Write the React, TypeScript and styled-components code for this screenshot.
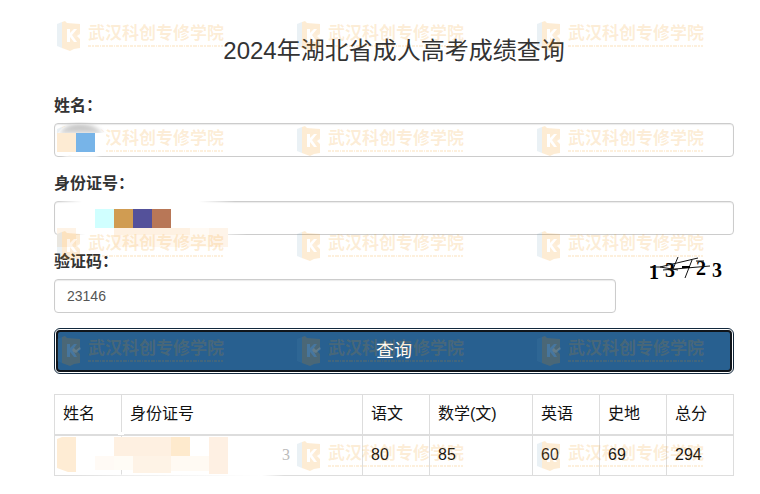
import React from "react";
import styled, { createGlobalStyle } from "styled-components";

const GlobalStyle = createGlobalStyle`
  *, *::before, *::after { box-sizing: border-box; }
  body {
    margin: 0;
    background: #fff;
    color: #333;
    font-family: "Liberation Sans", "Noto Sans CJK SC", sans-serif;
    font-size: 16px;
    line-height: 24px;
  }
`;

const Page = styled.div`
  position: relative;
  overflow: hidden;
  padding: 36px 26px 18px 54px;
`;

const Title = styled.h1`
  margin: 0;
  font-size: 24px;
  line-height: 30px;
  font-weight: 400;
  text-align: center;
`;

const Form = styled.form`
  display: flex;
  flex-direction: column;
  gap: 14px;
  margin-top: 27px;
`;

const Field = styled.div`
  flex: 1;
  display: flex;
  flex-direction: column;
  gap: 4px;
`;

const Label = styled.label`
  align-self: flex-start;
  font-weight: 700;
  line-height: 26px;
`;

const Control = styled.div`
  position: relative;
  display: flex;
`;

const TextInput = styled.input`
  flex: 1;
  min-width: 0;
  height: 34px;
  padding: 6px 12px;
  border: 1px solid #ccc;
  border-radius: 4px;
  background: #fff;
  box-shadow: inset 0 1px 1px rgba(0, 0, 0, 0.08);
  color: #555;
  font-family: inherit;
  font-size: 14px;
  line-height: 20px;
`;

const CodeRow = styled.div`
  display: flex;
  align-items: flex-start;
  gap: 30px;
`;

const Captcha = styled.svg`
  flex: none;
  width: 88px;
  height: 34px;
`;

const Submit = styled.button`
  height: 42px;
  margin: 3px 2px 2px;
  border: 2px solid #10151b;
  border-radius: 4px;
  outline: 1px solid #12283c;
  outline-offset: 1px;
  background: #286090;
  color: #fff;
  font-family: inherit;
  font-size: 18px;
  line-height: 24px;
`;

const TableWrap = styled.div`
  position: relative;
  margin-top: 20px;
`;

const Table = styled.table`
  width: 100%;
  table-layout: fixed;
  border-collapse: collapse;
  color: #111;
`;

const Col = styled.col<{ $w?: number }>`
  width: ${(p) => (p.$w ? `${p.$w}px` : "auto")};
`;

const cell = `
  height: 40px;
  padding: 7px 8px 9px;
  border: 1px solid #ddd;
  font-weight: 400;
  line-height: 23px;
  text-align: left;
`;

const HeadCell = styled.th`
  ${cell}
  border-bottom-width: 2px;
`;

const Cell = styled.td`
  ${cell}
`;

const FadedCell = styled(Cell)`
  padding-right: 72px;
  color: #bbb;
  font-family: "Liberation Serif", serif;
  text-align: right;
`;

const Mask = styled.svg<{ $front?: boolean }>`
  position: absolute;
  left: 0;
  bottom: 0;
  overflow: visible;
  pointer-events: none;
  z-index: ${(p) => (p.$front ? 1 : 0)};
`;

const Watermarks = styled.div`
  position: absolute;
  inset: 21px auto auto 57px;
  display: grid;
  grid-template-columns: repeat(3, 240px);
  grid-auto-rows: 105px;
  pointer-events: none;
`;

const Mark = styled.div<{ $hidden: boolean }>`
  display: flex;
  align-items: flex-start;
  gap: 6px;
  visibility: ${(p) => (p.$hidden ? "hidden" : "visible")};
  color: rgba(242, 145, 0, 0.17);
`;

const MarkBody = styled.div`
  display: flex;
  flex-direction: column;
  gap: 2px;
`;

const MarkName = styled.span`
  font-family: "Noto Sans CJK SC", sans-serif;
  font-size: 17px;
  font-weight: 700;
  line-height: 21px;
  white-space: nowrap;
`;

const Logo = () => (
  <svg width="25" height="31" viewBox="0 0 25 31" aria-hidden="true">
    <path d="M0 3 5 1V27L0 25Z" fill="rgba(90,150,180,0.13)" />
    <path
      fillRule="evenodd"
      fill="currentColor"
      d="M5 1 8 0 10 2 23 3V13L20 15 23 18V27L17 28 13 30 5 27ZM10 8V21H13V16L17 21H20L15 14 20 8H17L13 12V8Z"
    />
    <path
      fill="rgba(255,255,255,0.14)"
      d="M10 8H13V12L17 8H20L17 12 19 14 23 11 24 13 19 17 17 16 20 21H17L13 16V21H10Z"
    />
  </svg>
);

const Watermark = ({ hidden }: { hidden: boolean }) => (
  <Mark $hidden={hidden} aria-hidden="true">
    <Logo />
    <MarkBody>
      <MarkName>武汉科创专修学院</MarkName>
      <svg width="136" height="4">
        <path
          d="M0 2H135"
          stroke="currentColor"
          strokeWidth="2"
          strokeDasharray="3 1 2 1 4 1 1 1"
          opacity="0.8"
        />
      </svg>
    </MarkBody>
  </Mark>
);

const NameMask = () => (
  <Mask $front width="110" height="34" aria-hidden="true">
    <defs>
      <linearGradient id="shade" x1="0" y1="0" x2="0" y2="1">
        <stop offset="0" stopColor="#bbb" />
        <stop offset="1" stopColor="#ddd" />
      </linearGradient>
      <filter id="soft" x="-20%" y="-20%" width="140%" height="140%">
        <feGaussianBlur stdDeviation="2" />
      </filter>
    </defs>
    <path d="M4 10Q8 1 26 1T50 10V31H4Z" fill="#fff" />
    <path d="M5 11Q10 1 26 1T49 11Z" fill="url(#shade)" filter="url(#soft)" />
    <rect x="3" y="10" width="49" height="22" fill="#fff" />
    <rect x="10" y="31" width="34" height="4" fill="#fff" filter="url(#soft)" />
    <rect x="3" y="10" width="19" height="19" fill="#fdebd3" />
    <rect x="22" y="10" width="19" height="19" fill="#77b4e8" />
  </Mask>
);

const CardMask = () => (
  <Mask width="200" height="34" aria-hidden="true">
    <defs>
      <linearGradient id="fade">
        <stop offset="0" stopColor="#fff" stopOpacity="0" />
        <stop offset="0.15" stopColor="#fff" />
        <stop offset="0.8" stopColor="#fff" />
        <stop offset="1" stopColor="#fff" stopOpacity="0" />
      </linearGradient>
    </defs>
    <rect x="1" y="-1" width="180" height="5" fill="url(#fade)" />
    <rect x="3" y="30" width="190" height="6" fill="url(#fade)" />
    <rect x="41" y="8" width="19" height="19" fill="#d0ffff" />
    <rect x="60" y="8" width="19" height="19" fill="#d09c52" />
    <rect x="79" y="8" width="19" height="19" fill="#54519a" />
    <rect x="98" y="8" width="19" height="19" fill="#b87757" />
    <rect x="3" y="27" width="19" height="19" fill="#fef3e6" />
    <rect x="60" y="27" width="76" height="7" fill="#fef1e2" />
    <rect x="60" y="34" width="76" height="12" fill="#fff8f0" />
    <rect x="136" y="27" width="19" height="19" fill="#fffaf4" />
    <rect x="155" y="27" width="19" height="19" fill="#fef4e9" />
  </Mask>
);

const ResultMask = () => (
  <Mask width="240" height="40" aria-hidden="true">
    <defs>
      <linearGradient id="edge">
        <stop offset="0" stopColor="#fff" stopOpacity="0" />
        <stop offset="0.3" stopColor="#fff" stopOpacity="0.5" />
        <stop offset="0.9" stopColor="#fff" />
        <stop offset="1" stopColor="#fff" stopOpacity="0" />
      </linearGradient>
    </defs>
    <rect x="64" y="-4" width="6" height="3" fill="#fff" />
    <rect x="60" y="1" width="14" height="33" fill="#fff" />
    <rect x="10" y="38" width="220" height="3" fill="url(#edge)" />
    <path d="M3 3 8 1H22V36H14L3 32Z" fill="#feecd4" />
    <rect x="60" y="1" width="57" height="19" fill="#fef0e1" />
    <rect x="117" y="1" width="19" height="19" fill="#feeacd" />
    <rect x="155" y="1" width="19" height="37" fill="#fef0e3" />
    <rect x="41" y="20" width="19" height="14" fill="#fffaf5" />
    <rect x="60" y="20" width="19" height="14" fill="#fffcf6" />
    <rect x="79" y="20" width="38" height="17" fill="#fef3e6" />
    <rect x="117" y="20" width="38" height="15" fill="#fffaf3" />
  </Mask>
);

const subjects = [
  ["语文", "80"],
  ["数学(文)", "85"],
  ["英语", "60"],
  ["史地", "69"],
  ["总分", "294"],
];

export default function App() {
  return (
    <Page>
      <GlobalStyle />
      <Title>2024年湖北省成人高考成绩查询</Title>
      <Form onSubmit={(e) => e.preventDefault()}>
        <Field>
          <Label htmlFor="name">姓名：</Label>
          <Control>
            <TextInput id="name" />
            <NameMask />
          </Control>
        </Field>
        <Field>
          <Label htmlFor="card">身份证号：</Label>
          <Control>
            <TextInput id="card" />
            <CardMask />
          </Control>
        </Field>
        <CodeRow>
          <Field>
            <Label htmlFor="code">验证码：</Label>
            <Control>
              <TextInput id="code" defaultValue="23146" />
            </Control>
          </Field>
          <Captcha viewBox="0 0 88 34" role="img" aria-label="13723">
            <g fill="#000" fontFamily="Liberation Serif, serif" fontWeight="700" fontSize="20">
              <text x="3" y="30">1</text>
              <text x="19" y="28">3</text>
              <text x="50" y="26">2</text>
              <text x="66" y="28">3</text>
            </g>
            <path
              d="M4 18H14L52 9M14 18 32 21M27 20 32 8M17 21 64 17M46 11 39 29M50 12H58"
              fill="none"
              stroke="#111"
            />
            <path d="M36 18H44" stroke="#000" strokeWidth="2" />
          </Captcha>
        </CodeRow>
        <Submit type="submit">查询</Submit>
      </Form>
      <TableWrap>
        <Table>
          <colgroup>
            <Col $w={67} />
            <Col />
            <Col $w={67} />
            <Col $w={103} />
            <Col $w={67} />
            <Col $w={67} />
            <Col $w={67} />
          </colgroup>
          <thead>
            <tr>
              <HeadCell scope="col">姓名</HeadCell>
              <HeadCell scope="col">身份证号</HeadCell>
              {subjects.map(([name]) => (
                <HeadCell scope="col" key={name}>{name}</HeadCell>
              ))}
            </tr>
          </thead>
          <tbody>
            <tr>
              <Cell />
              <FadedCell>3</FadedCell>
              {subjects.map(([name, score]) => (
                <Cell key={name}>{score}</Cell>
              ))}
            </tr>
          </tbody>
        </Table>
        <ResultMask />
      </TableWrap>
      <Watermarks>
        {Array.from({ length: 15 }, (_, i) => (
          <Watermark key={i} hidden={i === 12} />
        ))}
      </Watermarks>
    </Page>
  );
}
